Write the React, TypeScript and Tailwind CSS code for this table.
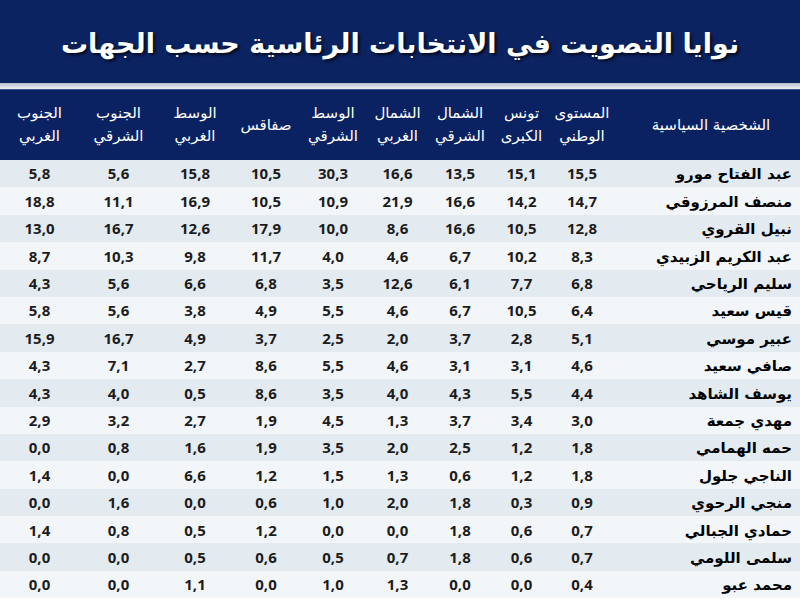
import React from "react";

const rows: [string, string[]][] = [
  ["عبد الفتاح مورو", ["15,5", "15,1", "13,5", "16,6", "30,3", "10,5", "15,8", "5,6", "5,8"]],
  ["منصف المرزوقي", ["14,7", "14,2", "16,6", "21,9", "10,9", "10,5", "16,9", "11,1", "18,8"]],
  ["نبيل القروي", ["12,8", "10,5", "16,6", "8,6", "10,0", "17,9", "12,6", "16,7", "13,0"]],
  ["عبد الكريم الزبيدي", ["8,3", "10,2", "6,7", "4,6", "4,0", "11,7", "9,8", "10,3", "8,7"]],
  ["سليم الرياحي", ["6,8", "7,7", "6,1", "12,6", "3,5", "6,8", "6,6", "5,6", "4,3"]],
  ["قيس سعيد", ["6,4", "10,5", "6,7", "4,6", "5,5", "4,9", "3,8", "5,6", "5,8"]],
  ["عبير موسي", ["5,1", "2,8", "3,7", "2,0", "2,5", "3,7", "4,9", "16,7", "15,9"]],
  ["صافي سعيد", ["4,6", "3,1", "3,1", "4,6", "5,5", "8,6", "2,7", "7,1", "4,3"]],
  ["يوسف الشاهد", ["4,4", "5,5", "4,3", "4,0", "3,5", "8,6", "0,5", "4,0", "4,3"]],
  ["مهدي جمعة", ["3,0", "3,4", "3,7", "1,3", "4,5", "1,9", "2,7", "3,2", "2,9"]],
  ["حمه الهمامي", ["1,8", "1,2", "2,5", "2,0", "3,5", "1,9", "1,6", "0,8", "0,0"]],
  ["الناجي جلول", ["1,8", "1,2", "0,6", "1,3", "1,5", "1,2", "6,6", "0,0", "1,4"]],
  ["منجي الرحوي", ["0,9", "0,3", "1,8", "2,0", "1,0", "0,6", "0,0", "1,6", "0,0"]],
  ["حمادي الجبالي", ["0,7", "0,6", "1,8", "0,0", "0,0", "1,2", "0,5", "0,8", "1,4"]],
  ["سلمى اللومي", ["0,7", "0,6", "1,8", "0,7", "0,5", "0,6", "0,5", "0,0", "0,0"]],
  ["محمد عبو", ["0,4", "0,0", "0,0", "1,3", "1,0", "0,0", "1,1", "0,0", "0,0"]],
];

const headers: [string, string][] = [
  ["المستوى", "الوطني"],
  ["تونس", "الكبرى"],
  ["الشمال", "الشرقي"],
  ["الشمال", "الغربي"],
  ["الوسط", "الشرقي"],
  ["صفاقس", ""],
  ["الوسط", "الغربي"],
  ["الجنوب", "الشرقي"],
  ["الجنوب", "الغربي"],
];

const cols = "grid grid-cols-[188px_60px_61px_62px_63px_66px_68px_74px_79px_79px]";
const arabic = { fontFamily: '"DejaVu Sans", "Noto Sans", sans-serif' };

export default function App() {
  return (
    <div dir="rtl" className="w-[800px] h-[601px] overflow-hidden bg-white flex flex-col" style={arabic}>
      <div className="h-[83px] bg-[#0c2362] flex items-center justify-center pt-[4px]">
        <h1 className="text-white font-bold text-[27px] leading-none [text-shadow:2px_2px_3px_rgba(0,0,0,0.7)]">
          نوايا التصويت في الانتخابات الرئاسية حسب الجهات
        </h1>
      </div>
      <div className="h-[6px] bg-gradient-to-b from-[#b8bfcc] to-[#eef0f4]" />
      <div className={`${cols} h-[71px] bg-[#0a2262] text-white border-t border-[#3a5590]`}>
        <div className="flex items-center justify-center pl-[10px] text-[15px]">الشخصية السياسية</div>
        {headers.map(([a, b], i) => (
          <div key={i} className="flex flex-col items-center justify-center text-[15px] leading-[23px]">
            <span>{a}</span>
            {b && <span>{b}</span>}
          </div>
        ))}
      </div>
      {rows.map(([name, vals], r) => (
        <div
          key={r}
          className={`${cols} h-[27.4px] ${r % 2 === 0 ? "bg-[#e3ebf1]" : "bg-[#f2f6f9]"}`}
        >
          <div className="flex items-center pr-[8px] pt-[2px] text-[15px] text-black font-semibold">{name}</div>
          {vals.map((v, i) => (
            <div
              key={i}
              className="flex items-center justify-center text-[15px] font-bold text-[#1c1c1c]"
              style={{ fontFamily: '"Open Sans", sans-serif' }}
            >
              {v}
            </div>
          ))}
        </div>
      ))}
    </div>
  );
}
